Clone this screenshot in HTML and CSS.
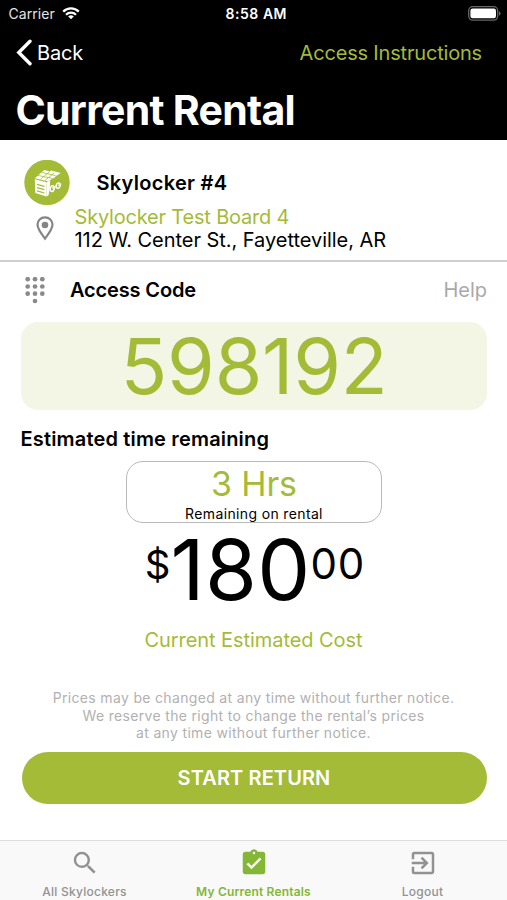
FILE: index.html
```
<!DOCTYPE html>
<html lang="en">
<head>
<meta charset="utf-8">
<title>Current Rental</title>
<link rel="stylesheet" href="styles.css">
</head>
<body>
<header class="header">
  <div class="status">
    <div class="carrier">
      <span>Carrier</span>
      <svg width="18" height="13" viewBox="0 0 18 13" fill="none" stroke="#fff" stroke-width="2.3"><path d="M1.2 4.6a11 11 0 0 1 15.6 0M4 7.7a7.1 7.1 0 0 1 10 0"/><path d="M9 12.3 6.2 9.6a4 4 0 0 1 5.6 0z" fill="#fff" stroke="none"/></svg>
    </div>
    <span class="clock">8:58 AM</span>
    <svg class="battery" width="33" height="15" viewBox="0 0 33 15"><rect x=".7" y=".7" width="29" height="13.4" rx="4" fill="none" stroke="#67676a" stroke-width="1.3"/><rect x="2.4" y="2.5" width="25.6" height="9.8" rx="2.2" fill="#fff"/><path d="M31 5.2q1.6.7 1.6 2.3T31 9.8z" fill="#67676a"/></svg>
  </div>
  <nav class="nav">
    <a class="back"><svg width="17" height="27" viewBox="0 0 17 27" fill="none" stroke="#fff" stroke-width="3.4" stroke-linecap="round" stroke-linejoin="miter"><path d="M14 2.2 2.8 13.5 14 24.8"/></svg><span>Back</span></a>
    <a class="instructions">Access Instructions</a>
  </nav>
  <h1 class="title">Current Rental</h1>
</header>
<main class="main">
  <section class="locker">
    <div class="locker-row">
      <svg width="46" height="46" viewBox="0 0 46 46"><circle cx="23" cy="22.500" r="22.700" fill="#a4bb37"/>
        <path d="M10.800 19.200 22.600 22.200V36.600L11.300 33z" fill="#fff"/>
        <path d="m10.800 18.200 6-5.200 3.400-3 5.800 1.500.8-1 10 2.400-4.800 3-1.300 1.600-7 3.700z" fill="#fff"/>
        <path d="M22.600 22.200 26.200 20l-.5 8.600-1.200 6.600-1.900 1.400z" fill="#fff"/>
        <path d="m13.800 15.400 14.600 3M17.600 12.400l14 3.200M16.600 19.200l9.200-7.600M21.200 20.300l9-7.400" stroke="#a4bb37" stroke-width=".8" fill="none"/>
        <path d="m13 24.400 7.400 2M13 27.600l7.400 2M13 30.800l7.400 2.200" stroke="#a4bb37" stroke-width="1.200"/>
        <g fill="#a4bb37" stroke="#fff" stroke-width="1.500"><ellipse cx="28.200" cy="28.600" rx="2" ry="2.900" transform="rotate(18 28.200 28.600)"/><ellipse cx="34.200" cy="25.600" rx="2" ry="2.700" transform="rotate(25 34.200 25.600)"/></g>
        <path d="m28 28.200 2.400-1m3.600-1.600 2.400-1" stroke="#fff" stroke-width="1.100"/>
      </svg>
      <h2 class="locker-name">Skylocker #4</h2>
    </div>
    <div class="address-row">
      <svg width="18" height="25" viewBox="0 0 18 25"><path d="M9 1.300c4.300 0 7.500 3.200 7.500 7.300 0 4.600-4.500 10.200-7.500 14C6 18.800 1.500 13.200 1.500 8.600 1.500 4.500 4.700 1.300 9 1.300z" fill="none" stroke="#858585" stroke-width="2.200"/><circle cx="9" cy="9" r="3.300" fill="#858585"/></svg>
      <div class="address"><div class="board">Skylocker Test Board 4</div><div class="street">112 W. Center St., Fayetteville, AR</div></div>
    </div>
  </section>
  <section class="access">
    <svg width="20" height="27" viewBox="0 0 20 27" fill="#8a8a8a"><circle cx="2.700" cy="2.200" r="2.350"/><circle cx="10" cy="2.200" r="2.350"/><circle cx="17.300" cy="2.200" r="2.350"/><circle cx="2.700" cy="9.500" r="2.350"/><circle cx="10" cy="9.500" r="2.350"/><circle cx="17.300" cy="9.500" r="2.350"/><circle cx="2.700" cy="16.700" r="2.350"/><circle cx="10" cy="16.700" r="2.350"/><circle cx="17.300" cy="16.700" r="2.350"/><circle cx="10" cy="24" r="2.350"/></svg>
    <h2 class="access-title">Access Code</h2>
    <a class="help">Help</a>
  </section>
  <div class="code">598192</div>
  <h2 class="remaining-title">Estimated time remaining</h2>
  <div class="remaining">
    <div class="hours">3 Hrs</div>
    <div class="hours-note">Remaining on rental</div>
  </div>
  <div class="price"><span class="currency">$</span><span class="amount">180</span><span class="cents">00</span></div>
  <div class="cost">Current Estimated Cost</div>
  <p class="notice">Prices may be changed at any time without further notice.<br>We reserve the right to change the rental’s prices<br>at any time without further notice.</p>
  <button class="return">START RETURN</button>
</main>
<footer class="tabs">
  <a class="tab"><svg width="30" height="30" viewBox="0 0 24 24" fill="#929292"><path d="M15.500 14h-.79l-.28-.27A6.470 6.470 0 0 0 16 9.500 6.500 6.500 0 1 0 9.500 16c1.610 0 3.090-.59 4.230-1.570l.27.28v.79l5 4.990L20.490 19l-4.990-5zm-6 0C7.010 14 5 11.990 5 9.500S7.010 5 9.500 5 14 7.010 14 9.500 11.990 14 9.500 14z"/></svg><span>All Skylockers</span></a>
  <a class="tab active"><svg width="30" height="30" viewBox="0 0 24 24" fill="#83b735"><path d="M19 3h-4.180C14.400 1.840 13.300 1 12 1s-2.400.84-2.820 2H5c-1.100 0-2 .9-2 2v14c0 1.100.9 2 2 2h14c1.100 0 2-.9 2-2V5c0-1.100-.9-2-2-2zm-7 0c.55 0 1 .45 1 1s-.45 1-1 1-1-.45-1-1 .45-1 1-1zm-2 14-4-4 1.410-1.410L10 14.170l6.590-6.590L18 9l-8 8z"/></svg><span>My Current Rentals</span></a>
  <a class="tab"><svg width="30" height="30" viewBox="0 0 24 24" fill="#929292"><path d="M10.090 15.590 11.500 17l5-5-5-5-1.410 1.410L12.670 11H3v2h9.670l-2.580 2.590zM19 3H5a2 2 0 0 0-2 2v4h2V5h14v14H5v-4H3v4a2 2 0 0 0 2 2h14c1.100 0 2-.9 2-2V5c0-1.100-.9-2-2-2z"/></svg><span>Logout</span></a>
</footer>
</body>
</html>
```
FILE: styles.css
```
* { box-sizing: border-box; }
body {
  margin: 0;
  height: 900px;
  overflow: hidden;
  display: flex;
  flex-direction: column;
  background: #fff;
  color: #000;
  font: 20px Inter, "Liberation Sans", sans-serif;
}
h1, h2, p { margin: 0; }
svg { display: block; flex: none; }

.header { flex: none; height: 140px; background: #000; color: #fff; }
.status {
  display: grid;
  grid-template-columns: 1fr auto 1fr;
  align-items: center;
  height: 28px;
  padding: 0 6px 0 8.5px;
  font-size: 14px;
  line-height: 28px;
}
.carrier { display: flex; align-items: center; gap: 7px; color: #e4e4e4; letter-spacing: 0.06px; }
.carrier svg { margin-top: -2px; }
.clock { padding-left: 3px; font-weight: 600; font-size: 14px; letter-spacing: 0.55px; }
.battery { justify-self: end; margin-top: -2px; }
.nav {
  display: flex;
  justify-content: space-between;
  align-items: center;
  height: 49px;
  padding: 0 25px 0 16px;
}
.back { display: flex; align-items: center; gap: 4px; letter-spacing: -0.2px; }
.instructions { color: #a4bb37; letter-spacing: -0.18px; }
.title { padding-left: 15.5px; font-size: 41px; line-height: 66px; font-weight: 700; letter-spacing: -0.74px; }

.main { flex: none; height: 700px; }
.locker { height: 122px; padding-top: 19px; border-bottom: 2px solid #cfcfcf; }
.locker-row { display: flex; align-items: center; gap: 26.5px; height: 47px; padding-left: 24px; }
.locker-name { font-size: 20px; font-weight: 600; letter-spacing: 0.3px; }
.address-row { display: flex; align-items: center; gap: 20.5px; padding-left: 36px; }
.address-row svg { margin-top: -1px; }
.address { line-height: 22.5px; }
.board { color: #a4bb37; letter-spacing: -0.19px; }
.street { letter-spacing: -0.04px; }

.access { display: flex; align-items: center; height: 56px; padding: 0 20px 0 25px; }
.access-title { margin-left: 25px; font-size: 20px; font-weight: 600; letter-spacing: -0.15px; }
.help { margin-left: auto; color: #a9a9a9; }
.code {
  height: 88px;
  margin: 4px 20px 0 21px;
  border-radius: 17px;
  background: #f3f6e5;
  color: #a4bb37;
  font-size: 77px;
  font-weight: 440;
  line-height: 88px;
  letter-spacing: -0.2px;
  text-align: center;
}
.remaining-title { padding-left: 20.5px; font-size: 20px; font-weight: 600; line-height: 58px; height: 51px; letter-spacing: 0.17px; }
.remaining {
  width: 256px;
  height: 62px;
  margin: 0 auto 0 126px;
  border: 1.5px solid #b9b9b9;
  border-radius: 17px;
  text-align: center;
}
.hours { color: #a4bb37; font-size: 34px; line-height: 43px; height: 43px; letter-spacing: -0.16px; }
.hours-note { font-size: 14px; line-height: 18px; letter-spacing: 0.36px; }
.price { display: flex; justify-content: center; align-items: flex-start; height: 98px; padding: 14px 0 0 3px; }
.currency { font-size: 40px; line-height: 56px; }
.amount { font-size: 84px; font-weight: 430; line-height: 65px; letter-spacing: 0.3px; }
.cents { font-size: 42px; line-height: 53px; letter-spacing: 0.8px; }
.cost { color: #a4bb37; text-align: center; line-height: 38px; height: 38px; letter-spacing: -0.06px; }
.notice { height: 93px; padding-top: 30px; color: #b1b1b1; font-size: 14px; line-height: 17.5px; letter-spacing: 0.33px; text-align: center; }
.return {
  display: block;
  width: 465px;
  height: 52px;
  margin: 0 0 0 21.5px;
  padding: 1px 0 0;
  border: 0;
  border-radius: 26px;
  background: #a4bb37;
  color: #fff;
  font: 560 20px/51px Inter, "Liberation Sans", sans-serif;
  letter-spacing: 0.1px;
}

.tabs { flex: none; display: grid; grid-template-columns: repeat(3, 1fr); height: 60px; border-top: 1px solid #dedede; background: #f9f9f9; }
.tab { display: flex; flex-direction: column; align-items: center; padding-top: 7px; color: #929292; font-size: 12px; font-weight: 500; letter-spacing: 0.25px; }
.tab span { margin-top: 6px; line-height: 16px; }
.tab.active { color: #83b735; font-weight: 600; letter-spacing: 0.18px; }
```
